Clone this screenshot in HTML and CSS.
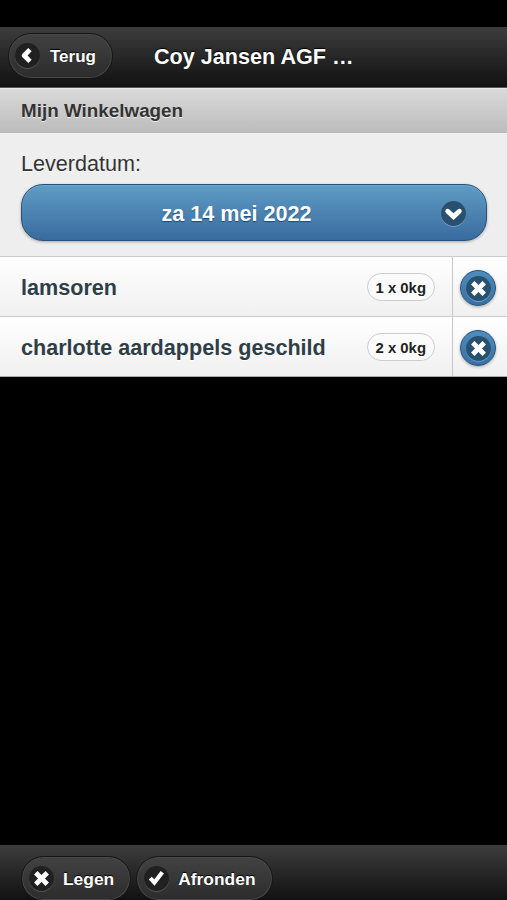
FILE: index.html
```
<!DOCTYPE html>
<html lang="nl">
<head>
<meta charset="utf-8">
<title>Mijn Winkelwagen</title>
<link rel="stylesheet" href="styles.css">
</head>
<body>
<div class="page">
	<header class="bar header">
		<a href="#" class="btn back">
			<span class="icon"><svg viewBox="0 0 24 24"><path d="M14.4 6.4 L8.8 12 L14.4 17.6"/></svg></span>
			Terug
		</a>
		<h1>Coy Jansen AGF …</h1>
	</header>
	<main>
		<h2 class="divider">Mijn Winkelwagen</h2>
		<div class="field">
			<label>Leverdatum:</label>
			<a href="#" class="select">
				<span class="value">za 14 mei 2022</span>
				<span class="icon"><svg viewBox="0 0 24 24"><path class="arrow" d="M6.4 9.8 L12 15 L17.6 9.8"/></svg></span>
			</a>
		</div>
		<ul class="list">
			<li>
				<a href="#" class="name">lamsoren</a>
				<span class="count">1 x 0kg</span>
				<a href="#" class="delete"><span class="round"><span class="icon"><svg viewBox="0 0 24 24"><path d="M6.5 6.5 L17.5 17.5 M17.5 6.5 L6.5 17.5"/></svg></span></span></a>
			</li>
			<li>
				<a href="#" class="name">charlotte aardappels geschild</a>
				<span class="count">2 x 0kg</span>
				<a href="#" class="delete"><span class="round"><span class="icon"><svg viewBox="0 0 24 24"><path d="M6.5 6.5 L17.5 17.5 M17.5 6.5 L6.5 17.5"/></svg></span></span></a>
			</li>
		</ul>
	</main>
	<footer class="bar footer">
		<a href="#" class="btn">
			<span class="icon"><svg viewBox="0 0 24 24"><path d="M6.5 6.5 L17.5 17.5 M17.5 6.5 L6.5 17.5"/></svg></span>
			Legen
		</a>
		<a href="#" class="btn">
			<span class="icon"><svg viewBox="0 0 24 24"><path class="check" d="M6 11.6 L10 15.8 L17.6 6"/></svg></span>
			Afronden
		</a>
	</footer>
</div>
</body>
</html>
```
FILE: styles.css
```
* {margin:0; padding:0; box-sizing:border-box}
body {background:#000; font-family:"Liberation Sans", Arial, sans-serif; font-size:21.6px; overflow:hidden}
a {color:inherit; text-decoration:none}
li {list-style:none}
.page {display:flex; flex-direction:column; height:900px; padding-top:27px; overflow:hidden}

/* bars */
.bar {display:flex; color:#fff; background:linear-gradient(#3c3c3c, #111); text-shadow:0 -1px 1px #000; flex:none}
.header {height:61px; padding:5px 8px; border-top:1px solid #383838; border-bottom:1px solid #555}
.header h1 {padding-left:41px; font-size:21.6px; line-height:47px}
.footer {height:55px; margin-top:auto; padding:10px 21px 0; gap:5px; border-top:1px solid #3c3c3c}

.btn {
    display:flex;
    align-items:center;
    gap:9px;
    height:45px;
    padding:0 16px 0 6px;
    border:1px solid #151515;
    border-radius:23px;
    background:linear-gradient(#424242, #2c2c2c);
    box-shadow:inset 0 0 0 1px #484848;
    font-size:17px;
    font-weight:bold;
}
.header .btn {height:46px; padding-top:1px; gap:10px}
.footer .btn {padding-left:7px; padding-top:1px; font-size:17.4px}

/* icons */
.icon {display:block; flex:none; width:25px; height:25px; border-radius:50%; background:#202020; box-shadow:0 1px 0 #555}
.icon svg {display:block; width:25px; height:25px; fill:none; stroke:#fff; stroke-width:4.6; stroke-linejoin:round}
.icon .check {stroke-width:4; stroke-linejoin:miter}
.icon .arrow {stroke-linecap:round; stroke-linejoin:miter}
.btn .icon {margin-top:-2px}

/* content */
.divider {height:45px; padding-left:21px; border-top:1px solid #e8e8e8; border-bottom:1px solid #bbb; background:linear-gradient(#dadada, #bcbcbc); color:#333; font-size:18.85px; line-height:43px; text-shadow:0 1px 0 #eee}
.field {height:123px; padding:19px 20px 0 21px; background:#eee; color:#333; text-shadow:0 1px 0 #fff}
.field label {display:block; height:32px; line-height:24px}
.select {
    display:flex;
    align-items:center;
    height:57px;
    padding:1px 20px 0 0;
    border:1px solid #28507a;
    border-radius:22px;
    background:linear-gradient(#5f9cc5, #396b9e);
    box-shadow:inset 0 1px 0 #6da7cd, 0 1px 3px rgba(0,0,0,.3);
    color:#fff;
    font-weight:bold;
    text-shadow:0 1px 1px #194b7e;
}
.value {flex:1; padding-left:10px; padding-top:1px; text-align:center}
.select .icon, .delete .icon {background:#29516f; box-shadow:0 1px 0 #6c9fc7}

.list li {display:flex; align-items:center; height:60px; border-top:1px solid #ccc; background:linear-gradient(#fff, #f0f0f0); color:#2f3e46; font-weight:bold; text-shadow:0 1px 0 #fff}
.list li:last-child {height:61px; border-bottom:1px solid #aaa}
.name {flex:1; padding:3px 0 0 21px}
.count {height:28px; margin-right:17px; padding:0 8px; border:1px solid #ccc; border-radius:14px; background:#fbfbfb; color:#222; font-size:14.9px; line-height:28px}
.delete {display:flex; align-items:center; align-self:stretch; width:55px; padding:3px 0 0 7px; border-left:1px solid #c6c6c6}
.round {display:flex; align-items:center; justify-content:center; width:36px; height:36px; border:1px solid #28507a; border-radius:50%; background:linear-gradient(#4d8dbe, #396fa3); box-shadow:0 1px 3px rgba(0,0,0,.3)}
```
